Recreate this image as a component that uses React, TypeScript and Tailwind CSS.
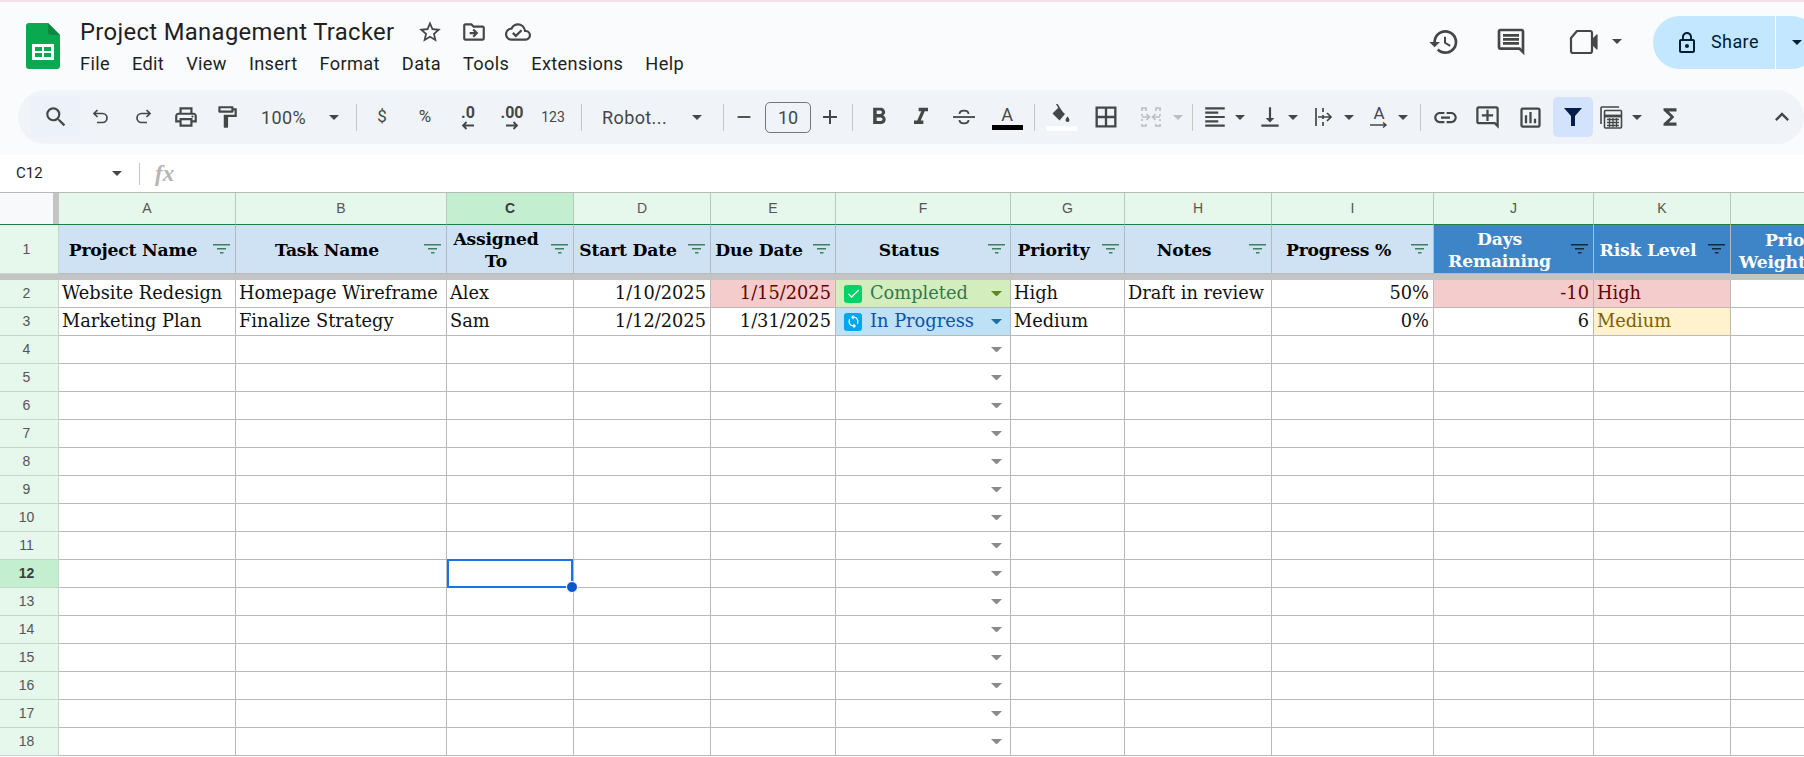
import {
  MdCheck, MdExpandLess, MdFormatAlignLeft, MdFormatItalic, MdFormatBold, MdFunctions, MdHistory, MdLink, MdLockOutline,
  MdOutlineAddComment, MdOutlineBorderAll, MdOutlineCloudDone, MdOutlineComment, MdOutlineDriveFileMove, MdOutlineFormatPaint,
  MdOutlineInsertChart, MdOutlineLocalPrintshop, MdOutlineStarBorder, MdSearch,
  MdSync, MdVerticalAlignBottom, MdAdd, MdRemove,
} from "react-icons/md";

const ui = "font-['Roboto','Liberation_Sans',sans-serif]";

function Caret({ color = "#444746", size = 10 }: { color?: string; size?: number }) {
  return (
    <svg width={size} height={size / 2} viewBox="0 0 10 5">
      <path d="M0 0h10L5 5z" fill={color} />
    </svg>
  );
}

function Sep({ w }: { w: string }) {
  return (
    <div className={`flex items-center justify-center shrink-0 ${w}`}>
      <div className="w-px h-[27px] bg-[#c7c7c7]" />
    </div>
  );
}

function Slot({ w, children }: { w: string; children: React.ReactNode }) {
  return <div className={`flex items-center justify-center shrink-0 h-full ${w}`}>{children}</div>;
}

function FilterIcon({ color = "#3f7f5f" }: { color?: string }) {
  return (
    <svg width="17" height="10" viewBox="0 0 17 10" className="shrink-0">
      <rect x="0" y="0" width="17" height="1.5" fill={color} />
      <rect x="4" y="4" width="9" height="1.5" fill={color} />
      <rect x="7" y="8" width="3.5" height="1.5" fill={color} />
    </svg>
  );
}

function Logo() {
  return (
    <svg width="34" height="46" viewBox="0 0 34 46" className="shrink-0">
      <path d="M3 0h19l12 12v31a3 3 0 0 1-3 3H3a3 3 0 0 1-3-3V3a3 3 0 0 1 3-3z" fill="#0ba94f" />
      <path d="M22 0l12 12H25a3 3 0 0 1-3-3z" fill="#0a8a3f" />
      <path d="M6 21h22v16H6z" fill="#fff" />
      <path d="M9 24h7v4H9zM18 24h7v4h-7zM9 30h7v4H9zM18 30h7v4h-7z" fill="#0ba94f" />
    </svg>
  );
}

function UndoIcon({ flip = false }: { flip?: boolean }) {
  return (
    <svg width="20" height="20" viewBox="0 0 20 20" fill="none" stroke="#444746" strokeWidth="1.7" className={flip ? "-scale-x-100" : ""}>
      <path d="M6.5 3L3 6.5 6.5 10M3 6.5h8.5a4.5 4.5 0 0 1 0 9H6" />
    </svg>
  );
}

function StrikeIcon() {
  return (
    <svg width="24" height="22" viewBox="0 0 24 22" fill="none" stroke="#444746" strokeWidth="1.8">
      <path d="M1 11h22" />
      <path d="M7.5 8c0-4.5 9-4.5 9 0M7.5 14c0 4.5 9 4.5 9 0" />
    </svg>
  );
}

function VideoIcon() {
  return (
    <svg width="30" height="28" viewBox="0 0 30 28" fill="none" stroke="#444746" strokeWidth="2.2" strokeLinejoin="round">
      <path d="M8 3h13a2 2 0 0 1 2 2v18a2 2 0 0 1-2 2H4a2 2 0 0 1-2-2V10z" />
      <path d="M24 11l4-4v14l-4-4z" fill="#444746" stroke="#444746" strokeWidth="1.2" />
    </svg>
  );
}

function MergeIcon() {
  return (
    <svg width="22" height="22" viewBox="0 0 22 22" fill="none" stroke="#bcbec0" strokeWidth="1.7">
      <path d="M6 5V2H2v3M2 8v2M2 13v2M2 18v2h4v-2M16 5V2h4v3M20 8v2M20 13v2M20 18v2h-4v-2" />
      <path d="M2 11h7M6.5 8l3 3-3 3M20 11h-7M15.5 8l-3 3 3 3" />
    </svg>
  );
}

function WrapIcon() {
  return (
    <svg width="20" height="20" viewBox="0 0 20 20" fill="none" stroke="#444746" strokeWidth="1.7">
      <path d="M2 1v18M9 1v4M9 8v4M9 15v4M4 10h13M13 6l4 4-4 4" />
    </svg>
  );
}

function CalcIcon() {
  return (
    <svg width="24" height="24" viewBox="0 0 24 24" fill="none" stroke="#444746" strokeWidth="1.6">
      <path d="M2 19V3a1 1 0 0 1 1-1h17" />
      <rect x="5.5" y="5.5" width="17" height="17.5" rx="1" />
      <path d="M5.5 11h17" strokeWidth="2.8" />
      <path d="M8 14.5h12M8 17.5h12M8 20.5h12M10.5 13v9M14 13v9M17.5 13v9" strokeWidth="1.3" />
    </svg>
  );
}

function FillIcon() {
  return (
    <div className="flex flex-col items-center">
      <svg width="20" height="20" viewBox="0 0 20 20" fill="#444746">
        <path d="M5 0l1.3-.6 6 9.6H10z" />
        <path d="M1.5 9.5L7 4l7 6-5.5 6.5z" />
        <path d="M16.5 12.5s-2 2.2-2 3.6a2 2 0 0 0 4 0c0-1.4-2-3.6-2-3.6z" />
      </svg>
      <div className="w-[31px] h-[5px] bg-white mt-[2px]" />
    </div>
  );
}

function DecimalIcon({ label, dir }: { label: string; dir: "left" | "right" }) {
  return (
    <div className="flex flex-col items-center leading-none">
      <span className="text-[16px] font-bold text-[#444746] leading-[17px]">{label}</span>
      <svg width="14" height="9" viewBox="0 0 14 9" fill="none" stroke="#444746" strokeWidth="1.8">
        {dir === "left" ? <path d="M13 4.5H2M5.5 1L2 4.5 5.5 8" /> : <path d="M1 4.5h11M8.5 1L12 4.5 8.5 8" />}
      </svg>
    </div>
  );
}

function Toolbar() {
  const ic = "#444746";
  return (
    <div className={`flex items-center h-[54px] ml-[18px] pl-[13px] bg-[#f0f4f9] rounded-[27px] ${ui}`}>
      <div className="flex items-center justify-center shrink-0 w-[49px] h-[40px] bg-[#edf2fa]">
        <MdSearch size={26} color={ic} />
      </div>
      <Slot w="w-[41px]"><UndoIcon /></Slot>
      <Slot w="w-[44px]"><UndoIcon flip /></Slot>
      <Slot w="w-[42px]"><MdOutlineLocalPrintshop size={26} color={ic} /></Slot>
      <Slot w="w-[40px]"><MdOutlineFormatPaint size={26} color={ic} /></Slot>
      <div className="shrink-0 w-[75px] pl-[14px] text-[18px] tracking-[0.4px] text-[#444746]">100%</div>
      <Slot w="w-[24px]"><Caret /></Slot>
      <Sep w="w-[20px]" />
      <Slot w="w-[32px]"><span className="text-[17px] text-[#444746]">$</span></Slot>
      <Slot w="w-[54px]"><span className="text-[17px] text-[#444746]">%</span></Slot>
      <Slot w="w-[32px]"><DecimalIcon label=".0" dir="left" /></Slot>
      <Slot w="w-[56px]"><DecimalIcon label=".00" dir="right" /></Slot>
      <Slot w="w-[26px]"><span className="text-[14px] text-[#444746]">123</span></Slot>
      <Sep w="w-[30px]" />
      <div className="shrink-0 w-[89px] pl-[6px] text-[18px] tracking-[0.4px] text-[#444746]">Robot...</div>
      <Slot w="w-[24px]"><Caret /></Slot>
      <Sep w="w-[28px]" />
      <Slot w="w-[14px]"><MdRemove size={22} color={ic} className="shrink-0" /></Slot>
      <div className="flex items-center justify-center shrink-0 ml-[14px] w-[46px] h-[31px] border border-[#747775] rounded-[5px] text-[18px] text-[#444746]">10</div>
      <Slot w="w-[38px]"><MdAdd size={24} color={ic} /></Slot>
      <Sep w="w-[6px]" />
      <Slot w="w-[48px]"><MdFormatBold size={28} color={ic} /></Slot>
      <Slot w="w-[36px]"><MdFormatItalic size={28} color={ic} /></Slot>
      <Slot w="w-[50px]"><StrikeIcon /></Slot>
      <Slot w="w-[36px]">
        <div className="flex flex-col items-center">
          <span className="text-[18px] leading-[19px] text-[#444746]">A</span>
          <div className="w-[31px] h-[5px] bg-black mt-[1px]" />
        </div>
      </Slot>
      <Sep w="w-[18px]" />
      <Slot w="w-[36px]"><FillIcon /></Slot>
      <Slot w="w-[54px]"><MdOutlineBorderAll size={28} color={ic} /></Slot>
      <Slot w="w-[36px]"><MergeIcon /></Slot>
      <Slot w="w-[18px]"><Caret color="#bcbec0" /></Slot>
      <Sep w="w-[11px]" />
      <Slot w="w-[34px]"><MdFormatAlignLeft size={26} color={ic} /></Slot>
      <Slot w="w-[16px]"><Caret /></Slot>
      <div className="flex items-center justify-center shrink-0 w-[37px] pl-[7px]"><MdVerticalAlignBottom size={26} color={ic} /></div>
      <Slot w="w-[16px]"><Caret /></Slot>
      <div className="flex items-center justify-center shrink-0 w-[40px] pl-[6px]"><WrapIcon /></div>
      <Slot w="w-[16px]"><Caret /></Slot>
      <div className="flex items-center justify-center shrink-0 w-[38px] pl-[6px]">
        <div className="flex flex-col items-center">
          <span className="text-[17px] leading-[17px] text-[#444746]">A</span>
          <svg width="18" height="7" viewBox="0 0 18 7" fill="none" stroke="#444746" strokeWidth="1.5">
            <path d="M0 3h16M13 .5L16 3l-3 2.5" />
          </svg>
        </div>
      </div>
      <Slot w="w-[16px]"><Caret /></Slot>
      <Sep w="w-[18px]" />
      <Slot w="w-[32px]"><MdLink size={27} color={ic} /></Slot>
      <Slot w="w-[52px]"><MdOutlineAddComment size={27} color={ic} /></Slot>
      <Slot w="w-[34px]"><MdOutlineInsertChart size={27} color={ic} /></Slot>
      <div className="flex items-center justify-center shrink-0 ml-[6px] w-[40px] h-[40px] bg-[#d3e3fd] rounded-[5px]">
        <svg width="18" height="20" viewBox="0 0 18 20"><path d="M0 1h18l-7 8v10H7V9z" fill="#041e49" /></svg>
      </div>
      <Slot w="w-[36px]"><CalcIcon /></Slot>
      <Slot w="w-[16px]"><Caret /></Slot>
      <Slot w="w-[50px]"><MdFunctions size={26} color={ic} /></Slot>
      <div className="flex-1" />
      <Slot w="w-[44px]"><MdExpandLess size={28} color={ic} /></Slot>
    </div>
  );
}

function Header() {
  return (
    <div className={`bg-[#f9fbfd] h-[153px] shrink-0 ${ui}`}>
      <div className="flex h-[88px]">
        <div className="flex shrink-0 w-[1424px] pl-[26px] pt-[21px]">
          <Logo />
          <div className="ml-[20px]">
            <div className="flex items-center h-[26px] -mt-[4px]">
              <span className="text-[23.8px] text-[#1f1f1f] tracking-[0.35px] leading-[26px]">Project Management Tracker</span>
              <div className="flex items-center ml-[23px] gap-[18px]">
                <MdOutlineStarBorder size={26} color="#444746" />
                <MdOutlineDriveFileMove size={26} color="#444746" />
                <MdOutlineCloudDone size={26} color="#444746" />
              </div>
            </div>
            <div className="flex gap-[22px] mt-[7px] text-[18.2px] text-[#1f1f1f] tracking-[0.35px] leading-[24px]">
              <span>File</span><span>Edit</span><span>View</span><span>Insert</span><span>Format</span>
              <span>Data</span><span>Tools</span><span>Extensions</span><span>Help</span>
            </div>
          </div>
        </div>
        <div className="flex items-start shrink-0">
          <div className="flex items-center h-[53px] mt-[13px]">
            <Slot w="w-[40px]"><MdHistory size={32} color="#444746" /></Slot>
            <Slot w="w-[94px]"><MdOutlineComment size={32} color="#444746" /></Slot>
            <Slot w="w-[52px]"><VideoIcon /></Slot>
            <Slot w="w-[14px]"><Caret /></Slot>
          </div>
          <div className="flex items-center shrink-0 ml-[29px] mt-[14px] w-[165px] h-[53px] bg-[#c2e7ff] rounded-[27px] pl-[22px]">
            <MdLockOutline size={24} color="#001d35" className="shrink-0" />
            <span className="shrink-0 w-[64px] ml-[12px] -mt-[2px] text-[18px] tracking-[0.4px] text-[#001d35]">Share</span>
            <div className="shrink-0 w-px h-full bg-white" />
            <div className="flex justify-center shrink-0 w-[42px]"><Caret color="#001d35" /></div>
          </div>
        </div>
      </div>
      <Toolbar />
    </div>
  );
}

function FormulaBar() {
  return (
    <div className={`flex items-center h-[37px] shrink-0 bg-white ${ui}`}>
      <span className="w-[112px] pl-[16px] text-[15px] text-[#1f1f1f]">C12</span>
      <Caret />
      <div className="w-px h-[22px] bg-[#c7c7c7] ml-[17px]" />
      <span className="ml-[15px] text-[23px] leading-none font-bold italic text-[#b5b5b5] font-['Liberation_Serif',serif]">fx</span>
    </div>
  );
}

const line = "border-r border-b border-[#b9b9b9]";
const serif = "font-['DejaVu_Serif','Liberation_Serif',serif]";
const columns = ["A", "B", "C", "D", "E", "F", "G", "H", "I", "J", "K", ""];

function HeaderCell({ lines, dark = false }: { lines: string[]; dark?: boolean }) {
  return (
    <div className={`flex items-center overflow-hidden ${line} ${dark ? "bg-[#3d85c6] text-white" : "bg-[#cfe2f3] text-black"}`}>
      <div className={`flex-1 pt-[2px] text-center text-[17.2px] font-bold leading-[22px] tracking-[-0.2px] ${serif}`}>
        {lines.map((l) => <div key={l}>{l}</div>)}
      </div>
      <div className="flex justify-center shrink-0 w-[28px]"><FilterIcon color={dark ? "#14283c" : "#3f7f5f"} /></div>
    </div>
  );
}

function Cell({ children, right = false, bg = "bg-white", color = "text-[#111111]" }: { children?: React.ReactNode; right?: boolean; bg?: string; color?: string }) {
  return (
    <div className={`flex items-center overflow-hidden whitespace-nowrap text-[17.8px] pl-[3px] pr-[4px] ${serif} ${line} ${bg} ${color} ${right ? "justify-end" : ""}`}>
      {children}
    </div>
  );
}

function StatusCell({ label, kind }: { label?: string; kind?: "done" | "progress" }) {
  const bg = kind === "done" ? "bg-[#d4edbc]" : kind === "progress" ? "bg-[#bfe1f6]" : "bg-white";
  const text = kind === "done" ? "text-[#2f7a4f]" : "text-[#0a53a8]";
  const caret = kind === "done" ? "#5a8a20" : kind === "progress" ? "#1a6fa8" : "#8a8a8a";
  return (
    <div className={`flex items-center overflow-hidden whitespace-nowrap pl-[8px] text-[17.8px] ${serif} ${line} ${bg} ${text}`}>
      {kind === "done" && (
        <span className="flex items-center justify-center shrink-0 w-[18px] h-[18px] rounded-[3px] bg-[#00d26a]"><MdCheck size={15} color="#fff" /></span>
      )}
      {kind === "progress" && (
        <span className="flex items-center justify-center shrink-0 w-[18px] h-[18px] rounded-[3px] bg-[#00a6ed]"><MdSync size={15} color="#fff" /></span>
      )}
      {label && <span className="ml-[8px]">{label}</span>}
      <span className="ml-auto mr-[8px] shrink-0"><Caret color={caret} size={11} /></span>
    </div>
  );
}

function RowNum({ n, active = false }: { n: number; active?: boolean }) {
  return (
    <div className={`flex items-center justify-center pr-[5px] text-[14px] font-['Liberation_Sans',sans-serif] border-r border-b border-[#c4d6cb] ${active ? "bg-[#c4eed0] font-bold text-[#3c3c3c]" : "bg-[#e6f7ec] text-[#555555]"}`}>
      {n}
    </div>
  );
}

function EmptyRow({ n }: { n: number }) {
  const selected = n === 12;
  return (
    <>
      <RowNum n={n} active={selected} />
      <Cell />
      <Cell />
      <div className={`relative bg-white ${line}`}>
        {selected && (
          <div className="absolute -top-px left-0 right-0 -bottom-px z-10 border-2 border-[#1a73e8]">
            <div className="absolute -right-[7px] -bottom-[7px] w-[12px] h-[12px] rounded-full bg-[#0b57d0] border border-white" />
          </div>
        )}
      </div>
      <Cell />
      <Cell />
      <StatusCell />
      <Cell />
      <Cell />
      <Cell />
      <Cell />
      <Cell />
      <Cell />
    </>
  );
}

function Sheet() {
  const rows = [4, 5, 6, 7, 8, 9, 10, 11, 12, 13, 14, 15, 16, 17, 18];
  return (
    <div className="grid grid-cols-[59px_177px_211px_127px_137px_125px_175px_114px_147px_162px_160px_137px_170px] grid-rows-[32px_49px_6px_repeat(17,28px)] w-[1881px] border-t border-[#b9b9b9]">
      <div className="flex justify-end bg-[#f8f9fa] border-b border-[#1e7e45]">
        <div className="w-[6px] bg-[#c4c4c4]" />
      </div>
      {columns.map((c) => (
        <div
          key={c}
          className={`flex items-center justify-center text-[14px] font-['Liberation_Sans',sans-serif] border-r border-[#b9c7be] border-b-[1.5px] border-b-[#1e7e45] ${c === "C" ? "bg-[#c4eed0] font-bold text-[#3c3c3c]" : "bg-[#e6f7ec] text-[#555555]"}`}
        >
          {c}
        </div>
      ))}

      <RowNum n={1} />
      <HeaderCell lines={["Project Name"]} />
      <HeaderCell lines={["Task Name"]} />
      <HeaderCell lines={["Assigned", "To"]} />
      <HeaderCell lines={["Start Date"]} />
      <HeaderCell lines={["Due Date"]} />
      <HeaderCell lines={["Status"]} />
      <HeaderCell lines={["Priority"]} />
      <HeaderCell lines={["Notes"]} />
      <HeaderCell lines={["Progress %"]} />
      <HeaderCell lines={["Days", "Remaining"]} dark />
      <HeaderCell lines={["Risk Level"]} dark />
      <div className={`flex flex-col justify-center pt-[2px] bg-[#3d85c6] text-white text-[17.2px] font-bold leading-[22px] tracking-[-0.2px] pl-[8px] ${serif}`}>
        <div className="pl-[26px]">Priority</div>
        <div>Weight</div>
      </div>

      <div className="col-span-full bg-[#c4c4c4]" />

      <RowNum n={2} />
      <Cell>Website Redesign</Cell>
      <Cell>Homepage Wireframe</Cell>
      <Cell>Alex</Cell>
      <Cell right>1/10/2025</Cell>
      <Cell right bg="bg-[#f4cccc]" color="text-[#660000]">1/15/2025</Cell>
      <StatusCell label="Completed" kind="done" />
      <Cell>High</Cell>
      <Cell>Draft in review</Cell>
      <Cell right>50%</Cell>
      <Cell right bg="bg-[#f4cccc]" color="text-[#660000]">-10</Cell>
      <Cell bg="bg-[#f4cccc]" color="text-[#660000]">High</Cell>
      <Cell />

      <RowNum n={3} />
      <Cell>Marketing Plan</Cell>
      <Cell>Finalize Strategy</Cell>
      <Cell>Sam</Cell>
      <Cell right>1/12/2025</Cell>
      <Cell right>1/31/2025</Cell>
      <StatusCell label="In Progress" kind="progress" />
      <Cell>Medium</Cell>
      <Cell />
      <Cell right>0%</Cell>
      <Cell right>6</Cell>
      <Cell bg="bg-[#fff2cc]" color="text-[#7f6000]">Medium</Cell>
      <Cell />

      {rows.map((n) => <EmptyRow key={n} n={n} />)}
    </div>
  );
}

export default function App() {
  return (
    <div className="flex flex-col w-[1804px] h-[757px] overflow-hidden bg-white">
      <div className="h-[2px] shrink-0 bg-[#f3dfe8]" />
      <Header />
      <FormulaBar />
      <Sheet />
    </div>
  );
}
